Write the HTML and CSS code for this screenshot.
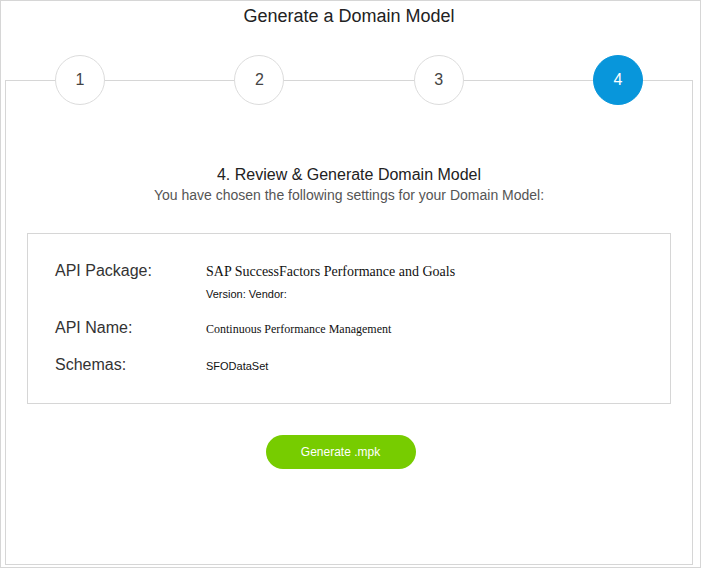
FILE: index.html
```
<!DOCTYPE html>
<html>
<head>
<meta charset="utf-8">
<link rel="stylesheet" href="styles.css">
</head>
<body>
<div class="frame">
  <div class="title">Generate a Domain Model</div>
  <div class="panel">
    <div class="steps">
      <div class="step">1</div>
      <div class="step">2</div>
      <div class="step">3</div>
      <div class="step active">4</div>
    </div>
    <div class="heading">4. Review &amp; Generate Domain Model</div>
    <div class="subtitle">You have chosen the following settings for your Domain Model:</div>
    <div class="summary">
      <div class="row row1">
        <div class="label">API Package:</div>
        <div class="value">
          <div class="serif14">SAP SuccessFactors Performance and Goals</div>
          <div class="small sub">Version: Vendor:</div>
        </div>
      </div>
      <div class="row row2">
        <div class="label">API Name:</div>
        <div class="value"><div class="serif12">Continuous Performance Management</div></div>
      </div>
      <div class="row row3">
        <div class="label">Schemas:</div>
        <div class="value"><div class="small">SFODataSet</div></div>
      </div>
    </div>
    <div class="actions">
      <button class="generate">Generate .mpk</button>
    </div>
  </div>
</div>
</body>
</html>
```
FILE: styles.css
```
html, body {
  margin: 0;
  padding: 0;
  background: #ffffff;
}
body {
  font-family: "Liberation Sans", Arial, sans-serif;
  color: #222;
}
.frame {
  box-sizing: border-box;
  width: 701px;
  height: 568px;
  border: 1px solid #d6d6d6;
  padding: 0 7px 2px 4px;
  display: flex;
  flex-direction: column;
}
.title {
  font-size: 18px;
  line-height: 30px;
  text-align: center;
  color: #222;
  margin-bottom: 49px;
}
.panel {
  flex: 1;
  border: 1px solid #d6d6d6;
  display: flex;
  flex-direction: column;
}
.steps {
  margin-top: -26px;
  padding: 0 49px 0 49px;
  display: flex;
  justify-content: space-between;
}
.step {
  box-sizing: border-box;
  width: 50px;
  height: 50px;
  border-radius: 50%;
  border: 1px solid #dcdcdc;
  background: #fff;
  display: flex;
  align-items: center;
  justify-content: center;
  font-size: 16px;
  color: #444;
}
.step.active {
  background: #0896db;
  border-color: #0896db;
  color: #fff;
}
.heading {
  margin-top: 60px;
  text-align: center;
  font-size: 16px;
  line-height: 20px;
  color: #222;
}
.subtitle {
  text-align: center;
  font-size: 14px;
  line-height: 20px;
  color: #555;
}
.summary {
  margin: 28px 21px 0 21px;
  border: 1px solid #d6d6d6;
  padding: 27px 0 26px 27px;
}
.row {
  display: flex;
}
.row2 { margin-top: 16px; }
.row3 { margin-top: 15px; }
.label {
  width: 151px;
  flex: none;
  font-size: 16px;
  line-height: 20px;
  color: #333;
}
.value {
  color: #111;
}
.serif14 {
  font-family: "Liberation Serif", "Times New Roman", serif;
  font-size: 14px;
  line-height: 22px;
}
.serif12 {
  font-family: "Liberation Serif", "Times New Roman", serif;
  font-size: 12px;
  line-height: 22px;
}
.small {
  font-size: 11px;
  line-height: 22px;
}
.small.sub {
  line-height: 16px;
  margin-top: 3px;
}
.actions {
  margin-top: 31px;
  display: flex;
  justify-content: center;
  padding-right: 17px;
}
.generate {
  width: 150px;
  height: 34px;
  border: none;
  border-radius: 17px;
  background: #77cc00;
  color: #fff;
  font-family: "Liberation Sans", Arial, sans-serif;
  font-size: 12px;
  padding: 0;
  cursor: pointer;
}
```
